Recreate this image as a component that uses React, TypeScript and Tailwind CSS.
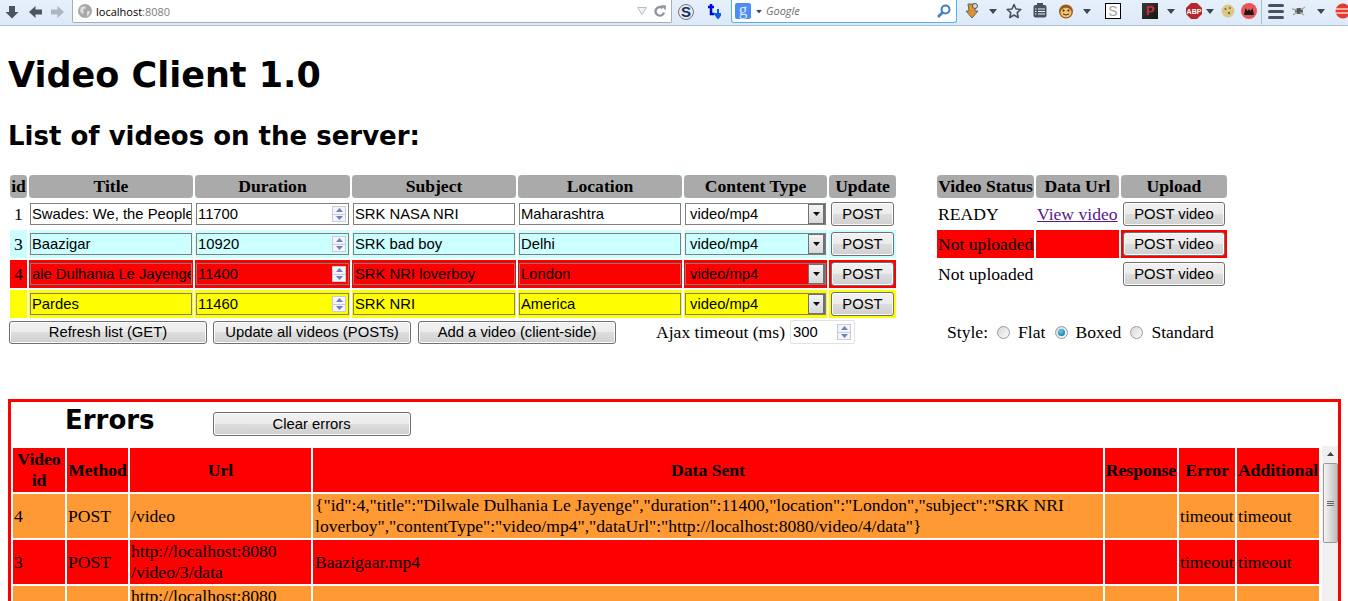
const sans = "font-['Liberation_Sans',Arial,sans-serif]";
const btn =
  "font-['Liberation_Sans',Arial,sans-serif] text-[14.8px] leading-none text-black border border-[#707070] rounded-[3px] bg-[linear-gradient(#f2f2f2_0%,#ebebeb_50%,#dddddd_50%,#cfcfcf_100%)] shadow-[inset_0_0_0_1px_#fbfbfb] flex items-center justify-center";

const rows = [
  { id: "1", title: "Swades: We, the People", duration: "11700", subject: "SRK NASA NRI", location: "Maharashtra", bg: "", field: "bg-white border-[#7f7f7f]" },
  { id: "3", title: "Baazigar", duration: "10920", subject: "SRK bad boy", location: "Delhi", bg: "bg-[#ccffff]", field: "bg-[#ccffff] border-[#7f7f7f]" },
  { id: "4", title: "ale Dulhania Le Jayenge", duration: "11400", subject: "SRK NRI loverboy", location: "London", bg: "bg-[#ff0000]", field: "bg-[#ff0000] border-[#7f7f7f]" },
  { id: "", title: "Pardes", duration: "11460", subject: "SRK NRI", location: "America", bg: "bg-[#ffff00]", field: "bg-[#ffff00] border-[#7f7f7f]" },
];

const errors = [
  { id: "4", method: "POST", url: ["/video"], data: ['{"id":4,"title":"Dilwale Dulhania Le Jayenge","duration":11400,"location":"London","subject":"SRK NRI', 'loverboy","contentType":"video/mp4","dataUrl":"http://localhost:8080/video/4/data"}'], err: "timeout", add: "timeout", bg: "bg-[#ff9933]" },
  { id: "3", method: "POST", url: ["http://localhost:8080", "/video/3/data"], data: ["Baazigaar.mp4"], err: "timeout", add: "timeout", bg: "bg-[#ff0000]" },
  { id: "", method: "", url: ["http://localhost:8080"], data: [], err: "", add: "", bg: "bg-[#ff9933]" },
];

function Caret({ className = "" }: { className?: string }) {
  return (
    <svg width="8" height="5" viewBox="0 0 8 5" className={className}>
      <path d="M0 0h8L4 5z" fill="#3c4754" />
    </svg>
  );
}

function Spinner() {
  return (
    <div className="w-[14px] h-[16px] flex flex-col border border-[#c8ccd8] bg-[#f4f5fa] shrink-0">
      <div className="flex-1 flex items-center justify-center border-b border-[#c8ccd8]">
        <svg width="7" height="4" viewBox="0 0 7 4"><path d="M3.5 0L7 4H0z" fill="#6f7fbf" /></svg>
      </div>
      <div className="flex-1 flex items-center justify-center">
        <svg width="7" height="4" viewBox="0 0 7 4"><path d="M0 0h7L3.5 4z" fill="#6f7fbf" /></svg>
      </div>
    </div>
  );
}

function Field({ value, cls, spin }: { value: string; cls: string; spin?: boolean }) {
  return (
    <div className={`h-[22px] mx-px border flex items-center pl-px overflow-hidden whitespace-nowrap ${sans} text-[14.8px] text-black ${spin ? "pr-[2px]" : ""} ${cls}`}>
      <span className="flex-1 min-w-0 overflow-hidden">{value}</span>
      {spin && <Spinner />}
    </div>
  );
}

function SelectBox({ cls }: { cls: string }) {
  return (
    <div className={`h-[22px] mx-px border flex items-center pl-[4px] ${sans} text-[14.8px] text-black ${cls}`}>
      <span className="flex-1">video/mp4</span>
      <div className="w-[17px] h-[20px] border border-[#707070] border-r-[2px] bg-[linear-gradient(#f4f4f4,#d8d8d8)] flex items-center justify-center">
        <svg width="7" height="4" viewBox="0 0 7 4"><path d="M0 0h7L3.5 4z" fill="#111" /></svg>
      </div>
    </div>
  );
}

function Th({ label }: { label: string }) {
  return (
    <th className="p-0 bg-[#ccffff]">
      <div className="h-[23px] bg-[#aaaaaa] rounded-[4px] flex items-center justify-center font-bold text-[17.6px] text-black whitespace-nowrap">
        {label}
      </div>
    </th>
  );
}

function Radio({ on }: { on?: boolean }) {
  return (
    <span className="w-[13px] h-[13px] rounded-full border border-[#9a9a9a] bg-[linear-gradient(135deg,#d8d8d8,#fbfbfb)] flex items-center justify-center shrink-0">
      {on && <span className="w-[7px] h-[7px] rounded-full bg-[radial-gradient(circle_at_40%_35%,#5ed0f0,#0b5f92)]" />}
    </span>
  );
}

function Toolbar() {
  return (
    <div className="h-[26px] bg-[linear-gradient(#e6f0fb,#dde9f7)] border-b border-[#a9c0d8] flex items-start overflow-hidden">
      <svg width="14" height="14" viewBox="0 0 14 14" className="ml-[5px] mt-[5px] shrink-0"><path d="M4 1h6v6h3.5L7 13.5.5 7H4z" fill="#4a5562" /></svg>
      <svg width="13" height="12" viewBox="0 0 13 12" className="ml-[10px] mt-[6px] shrink-0"><path d="M6.500 0v3.500H13v5H6.500V12L0 6z" fill="#4a5562" /></svg>
      <svg width="13" height="12" viewBox="0 0 13 12" className="ml-[9px] mt-[6px] shrink-0"><path d="M6.500 0v3.500H0v5h6.500V12L13 6z" fill="#aab6c3" /></svg>
      <div className="ml-[8px] w-[600px] h-[23px] bg-white border border-t-0 border-[#a5adb6] rounded-b-[2px] flex items-center shrink-0">
        <svg width="14" height="14" viewBox="0 0 14 14" className="ml-[5px]">
          <circle cx="7" cy="7" r="7" fill="#a7a7a7" />
          <path d="M3 3l4-1 1 2-3 2 1 3-2 1-2-3zM9 7l3 0-1 4-2 1z" fill="#dcdcdc" />
        </svg>
        <span className="ml-[4px] font-['Open_Sans',sans-serif] text-[11px] leading-none text-black">
          localhost<span className="text-[#7d7d7d]">:8080</span>
        </span>
        <svg width="10" height="8" viewBox="0 0 10 8" className="ml-auto"><path d="M.5.5h9L5 7.500z" fill="#eef2f6" stroke="#b4bcc5" /></svg>
        <svg width="12" height="12" viewBox="0 0 12 12" className="ml-[7px] mr-[5px]"><path d="M10 7.500A4.300 4.300 0 1 1 8.600 3" fill="none" stroke="#8c97a3" strokeWidth="2.400" /><path d="M7 0l5 .5L11.500 5.500z" fill="#8c97a3" /></svg>
      </div>
      <svg width="16" height="16" viewBox="0 0 16 16" className="ml-[6px] mt-[4px] shrink-0">
        <circle cx="8" cy="8" r="7.500" fill="#e8e8e8" stroke="#777" />
        <text x="8" y="13" textAnchor="middle" fontFamily="Liberation Sans" fontWeight="700" fontSize="15" fill="#13306e">S</text>
      </svg>
      <svg width="13" height="15" viewBox="0 0 13 15" className="ml-[14px] mt-[4px] shrink-0">
        <path d="M3 0v10h3M0 3h6" stroke="#0000e0" strokeWidth="2.500" fill="none" />
        <path d="M10 5v6M7 10l3 4 3-4z" stroke="#0060e0" strokeWidth="2" fill="#0060e0" />
      </svg>
      <div className="ml-[10px] w-[226px] h-[23px] bg-white border border-t-0 border-[#55b0fa] rounded-b-[3px] flex items-center shrink-0">
        <span className="ml-[3px] w-[16px] h-[16px] rounded-[2px] bg-[#4d8cf5] text-[#dfe9ff] font-['Liberation_Serif',serif] text-[17px] leading-[13px] text-center">g</span>
        <Caret className="ml-[4px] scale-75" />
        <span className="ml-[3px] font-['Open_Sans',sans-serif] italic text-[11px] text-[#6d6d6d]">Google</span>
        <svg width="14" height="14" viewBox="0 0 14 14" className="ml-auto mr-[5px]">
          <circle cx="8.500" cy="5.500" r="4" fill="none" stroke="#3f7fc0" strokeWidth="2" />
          <path d="M5.500 8.500L1 13" stroke="#3f7fc0" strokeWidth="2.500" />
        </svg>
      </div>
      <svg width="14" height="16" viewBox="0 0 14 16" className="ml-[8px] mt-[3px] shrink-0">
        <path d="M3 1h7v7h3l-6 7-6-7h3z" fill="#e0912a" stroke="#5c6670" />
        <circle cx="10" cy="3" r="2.500" fill="#d8d8d8" stroke="#555" />
      </svg>
      <Caret className="ml-[10px] mt-[9px] shrink-0" />
      <svg width="16" height="16" viewBox="0 0 16 16" className="ml-[9px] mt-[3px] shrink-0">
        <path d="M8 1.500l2 4.500 4.800.5-3.600 3.200 1 4.800L8 12l-4.200 2.500 1-4.800L1.200 6.500 6 6z" fill="#e6eef8" stroke="#465260" strokeWidth="1.600" strokeLinejoin="round" />
      </svg>
      <svg width="14" height="15" viewBox="0 0 14 15" className="ml-[11px] mt-[3px] shrink-0">
        <rect x=".5" y="2" width="13" height="12.500" rx="2" fill="#465260" />
        <rect x="4" y="0" width="6" height="3" fill="#465260" />
        <path d="M5 6h7M5 8.500h7M5 11h7M2 6h1.500M2 8.500h1.500M2 11h1.500" stroke="#e6eef8" />
      </svg>
      <svg width="16" height="16" viewBox="0 0 16 16" className="ml-[11px] mt-[3px] shrink-0">
        <circle cx="8" cy="8.500" r="7" fill="#9a5a1e" />
        <ellipse cx="8" cy="9.500" rx="5.500" ry="4.800" fill="#f0c070" />
        <circle cx="5.500" cy="7.500" r="1" fill="#222" /><circle cx="10.500" cy="7.500" r="1" fill="#222" />
        <path d="M5 11q3 2 6 0" stroke="#5a3010" fill="none" />
      </svg>
      <Caret className="ml-[9px] mt-[9px] shrink-0" />
      <div className="ml-[14px] mt-[3px] w-[16px] h-[16px] border border-black bg-white text-[#a0a0a0] font-['Liberation_Sans',sans-serif] text-[14px] leading-[14px] text-center shrink-0">S</div>
      <div className="ml-[21px] mt-[3px] w-[16px] h-[16px] bg-[linear-gradient(135deg,#3a3a3a,#151515)] text-[#c8313a] font-['Liberation_Sans',sans-serif] font-bold text-[13px] leading-[16px] text-center shrink-0">P</div>
      <Caret className="ml-[9px] mt-[9px] shrink-0" />
      <svg width="16" height="16" viewBox="0 0 16 16" className="ml-[11px] mt-[3px] shrink-0">
        <path d="M5 0h6l5 5v6l-5 5H5l-5-5V5z" fill="#b3272d" />
        <text x="8" y="10.500" textAnchor="middle" fontFamily="Liberation Sans" fontWeight="700" fontSize="7" fill="#fff">ABP</text>
      </svg>
      <Caret className="ml-[4px] mt-[9px] shrink-0" />
      <svg width="14" height="14" viewBox="0 0 14 14" className="ml-[7px] mt-[4px] shrink-0">
        <circle cx="7" cy="7" r="6.500" fill="#dcc78a" />
        <circle cx="4.500" cy="5" r="1.100" fill="#8a6a32" /><circle cx="9" cy="4" r="1" fill="#8a6a32" /><circle cx="8" cy="9" r="1.200" fill="#8a6a32" />
      </svg>
      <svg width="16" height="16" viewBox="0 0 16 16" className="ml-[6px] mt-[3px] shrink-0">
        <circle cx="8" cy="8" r="8" fill="#e8565c" />
        <path d="M3 12L4.500 5l2 3L8 6l1.500 2 2-3L13 12z" fill="#1a1a1a" />
      </svg>
      <div className="ml-[4px] w-px h-[24px] bg-[#a9bdd2] shrink-0" />
      <div className="ml-[6px] mt-[4px] w-[16px] flex flex-col gap-[3px] shrink-0">
        <div className="h-[3px] rounded-full bg-[#465260]" />
        <div className="h-[3px] rounded-full bg-[#465260]" />
        <div className="h-[3px] rounded-full bg-[#465260]" />
      </div>
      <svg width="16" height="14" viewBox="0 0 16 14" className="ml-[7px] mt-[4px] shrink-0">
        <ellipse cx="8" cy="7" rx="4" ry="3" fill="#555" />
        <path d="M2 11l4-3M14 3l-4 3M1 5l5 1M13 11l-4-3" stroke="#aaa" strokeWidth="1.500" />
      </svg>
      <Caret className="ml-[10px] mt-[9px] shrink-0" />
      <svg width="16" height="16" viewBox="0 0 16 16" className="ml-[10px] mt-[3px] shrink-0">
        <circle cx="8" cy="8" r="7.500" fill="#e23b30" />
        <path d="M1 6h14M1 10h14" stroke="#f6d0c8" strokeWidth="1.500" />
      </svg>
    </div>
  );
}

export default function App() {
  return (
    <div className="w-[1348px] h-[601px] overflow-hidden bg-white text-black font-['Liberation_Serif','Times_New_Roman',serif] text-[17.6px]">
      <Toolbar />

      <h1 className="mt-[28px] ml-[8px] font-['DejaVu_Sans',Verdana,sans-serif] font-bold text-[35px] leading-[42px]">Video Client 1.0</h1>
      <h2 className="mt-[24px] ml-[8px] font-['DejaVu_Sans',Verdana,sans-serif] font-bold text-[26px] leading-[32px]">List of videos on the server:</h2>

      <div className="mt-[21px] ml-[8px] flex items-start">
        <table className="table-fixed border-separate border-spacing-[2px] w-[890px]">
          <colgroup>
            <col className="w-[17px]" />
            <col className="w-[164px]" />
            <col className="w-[155px]" />
            <col className="w-[164px]" />
            <col className="w-[164px]" />
            <col className="w-[143px]" />
            <col className="w-[67px]" />
          </colgroup>
          <thead>
            <tr>
              {["id", "Title", "Duration", "Subject", "Location", "Content Type", "Update"].map((h) => (
                <Th key={h} label={h} />
              ))}
            </tr>
          </thead>
          <tbody>
            {rows.map((r) => (
              <tr key={r.title} className="h-[28px]">
                <td className={`p-0 text-center ${r.bg}`}>{r.id}</td>
                <td className={`p-0 ${r.bg}`}><Field value={r.title} cls={r.field} /></td>
                <td className={`p-0 ${r.bg}`}><Field value={r.duration} cls={r.field} spin /></td>
                <td className={`p-0 ${r.bg}`}><Field value={r.subject} cls={r.field} /></td>
                <td className={`p-0 ${r.bg}`}><Field value={r.location} cls={r.field} /></td>
                <td className={`p-0 ${r.bg}`}><SelectBox cls={r.field} /></td>
                <td className={`p-0 ${r.bg}`}>
                  <div className={`${btn} h-[24px] mx-[2px]`}>POST</div>
                </td>
              </tr>
            ))}
          </tbody>
        </table>

        <table className="table-fixed border-separate border-spacing-[2px] w-[292px] ml-[37px]">
          <colgroup>
            <col className="w-[97px]" />
            <col className="w-[83px]" />
            <col className="w-[106px]" />
          </colgroup>
          <thead>
            <tr>
              {["Video Status", "Data Url", "Upload"].map((h) => (
                <Th key={h} label={h} />
              ))}
            </tr>
          </thead>
          <tbody>
            <tr className="h-[28px]">
              <td className="p-0 pl-px">READY</td>
              <td className="p-0 pl-px whitespace-nowrap"><a href="#" className="underline text-[#551a8b]">View video</a></td>
              <td className="p-0"><div className={`${btn} h-[24px] mx-[2px]`}>POST video</div></td>
            </tr>
            <tr className="h-[28px]">
              <td className="p-0 pl-px bg-[#ff0000] whitespace-nowrap">Not uploaded</td>
              <td className="p-0 bg-[#ff0000]" />
              <td className="p-0 bg-[#ff0000]"><div className={`${btn} h-[24px] mx-[2px]`}>POST video</div></td>
            </tr>
            <tr className="h-[28px]">
              <td className="p-0 pl-px whitespace-nowrap">Not uploaded</td>
              <td className="p-0" />
              <td className="p-0"><div className={`${btn} h-[24px] mx-[2px]`}>POST video</div></td>
            </tr>
          </tbody>
        </table>
      </div>

      <div className="ml-[9px] flex items-center h-[24px]">
        <div className={`${btn} w-[198px] h-[23px]`}>Refresh list (GET)</div>
        <div className={`${btn} w-[198px] h-[23px] ml-[6px]`}>Update all videos (POSTs)</div>
        <div className={`${btn} w-[198px] h-[23px] ml-[7px]`}>Add a video (client-side)</div>
        <span className="ml-[40px] whitespace-nowrap">Ajax timeout (ms)</span>
        <div className={`ml-[5px] w-[65px] h-[24px] border border-[#dfe3e8] rounded-[2px] flex items-center pl-[2px] pr-[3px] ${sans} text-[14.8px]`}>
          <span className="flex-1">300</span>
          <Spinner />
        </div>
        <span className="ml-[92px]">Style:</span>
        <span className="ml-[9px]"><Radio /></span>
        <span className="ml-[8px]">Flat</span>
        <span className="ml-[10px]"><Radio on /></span>
        <span className="ml-[7px]">Boxed</span>
        <span className="ml-[9px]"><Radio /></span>
        <span className="ml-[8px]">Standard</span>
      </div>

      <div className="mt-[55px] ml-[8px] w-[1333px] h-[220px] border-[3px] border-[#ff0000] overflow-hidden">
        <div className="h-[44px] flex items-start">
          <h2 className="ml-[54px] mt-[1px] font-['DejaVu_Sans',Verdana,sans-serif] font-bold text-[26px] leading-[34px]">Errors</h2>
          <div className={`${btn} w-[198px] h-[24px] ml-[58px] mt-[10px]`}>Clear errors</div>
        </div>
        <div className="flex items-start">
          <table className="table-fixed border-separate border-spacing-[2px] w-[1310px] shrink-0">
            <colgroup>
              <col className="w-[52px]" />
              <col className="w-[61px]" />
              <col className="w-[181px]" />
              <col className="w-[790px]" />
              <col className="w-[72px]" />
              <col className="w-[56px]" />
              <col className="w-[82px]" />
            </colgroup>
            <thead>
              <tr className="h-[44px]">
                {["Video id", "Method", "Url", "Data Sent", "Response", "Error", "Additional"].map((h) => (
                  <th key={h} className="p-0 bg-[#ff0000] font-bold text-center leading-[21px]">{h}</th>
                ))}
              </tr>
            </thead>
            <tbody className="leading-[21px]">
              {errors.map((e, i) => (
                <tr key={i} className="h-[44px]">
                  <td className={`p-0 pl-px ${e.bg}`}>{e.id}</td>
                  <td className={`p-0 pl-px ${e.bg}`}>{e.method}</td>
                  <td className={`p-0 pl-px ${e.bg} ${e.id === "" ? "align-top" : ""}`}>{e.url.map((u) => <div key={u}>{u}</div>)}</td>
                  <td className={`p-0 pl-[2px] ${e.bg}`}>{e.data.map((u) => <div key={u}>{u}</div>)}</td>
                  <td className={`p-0 ${e.bg}`} />
                  <td className={`p-0 pl-px ${e.bg}`}>{e.err}</td>
                  <td className={`p-0 pl-px ${e.bg}`}>{e.add}</td>
                </tr>
              ))}
            </tbody>
          </table>
          <div className="ml-px w-[16px] h-[160px] bg-[#f0f0f0] flex flex-col items-center pt-[6px] shrink-0">
            <svg width="7" height="4" viewBox="0 0 7 4"><path d="M3.500 0L7 4H0z" fill="#444" /></svg>
            <div className="mt-[7px] w-[15px] h-[80px] border border-[#9a9a9a] rounded-[2px] bg-[linear-gradient(90deg,#f4f4f4,#dadada_50%,#bdbdbd)] flex flex-col items-center justify-center gap-px">
              <div className="w-[7px] h-px bg-[#666]" />
              <div className="w-[7px] h-px bg-[#666]" />
              <div className="w-[7px] h-px bg-[#666]" />
            </div>
          </div>
        </div>
      </div>
    </div>
  );
}
